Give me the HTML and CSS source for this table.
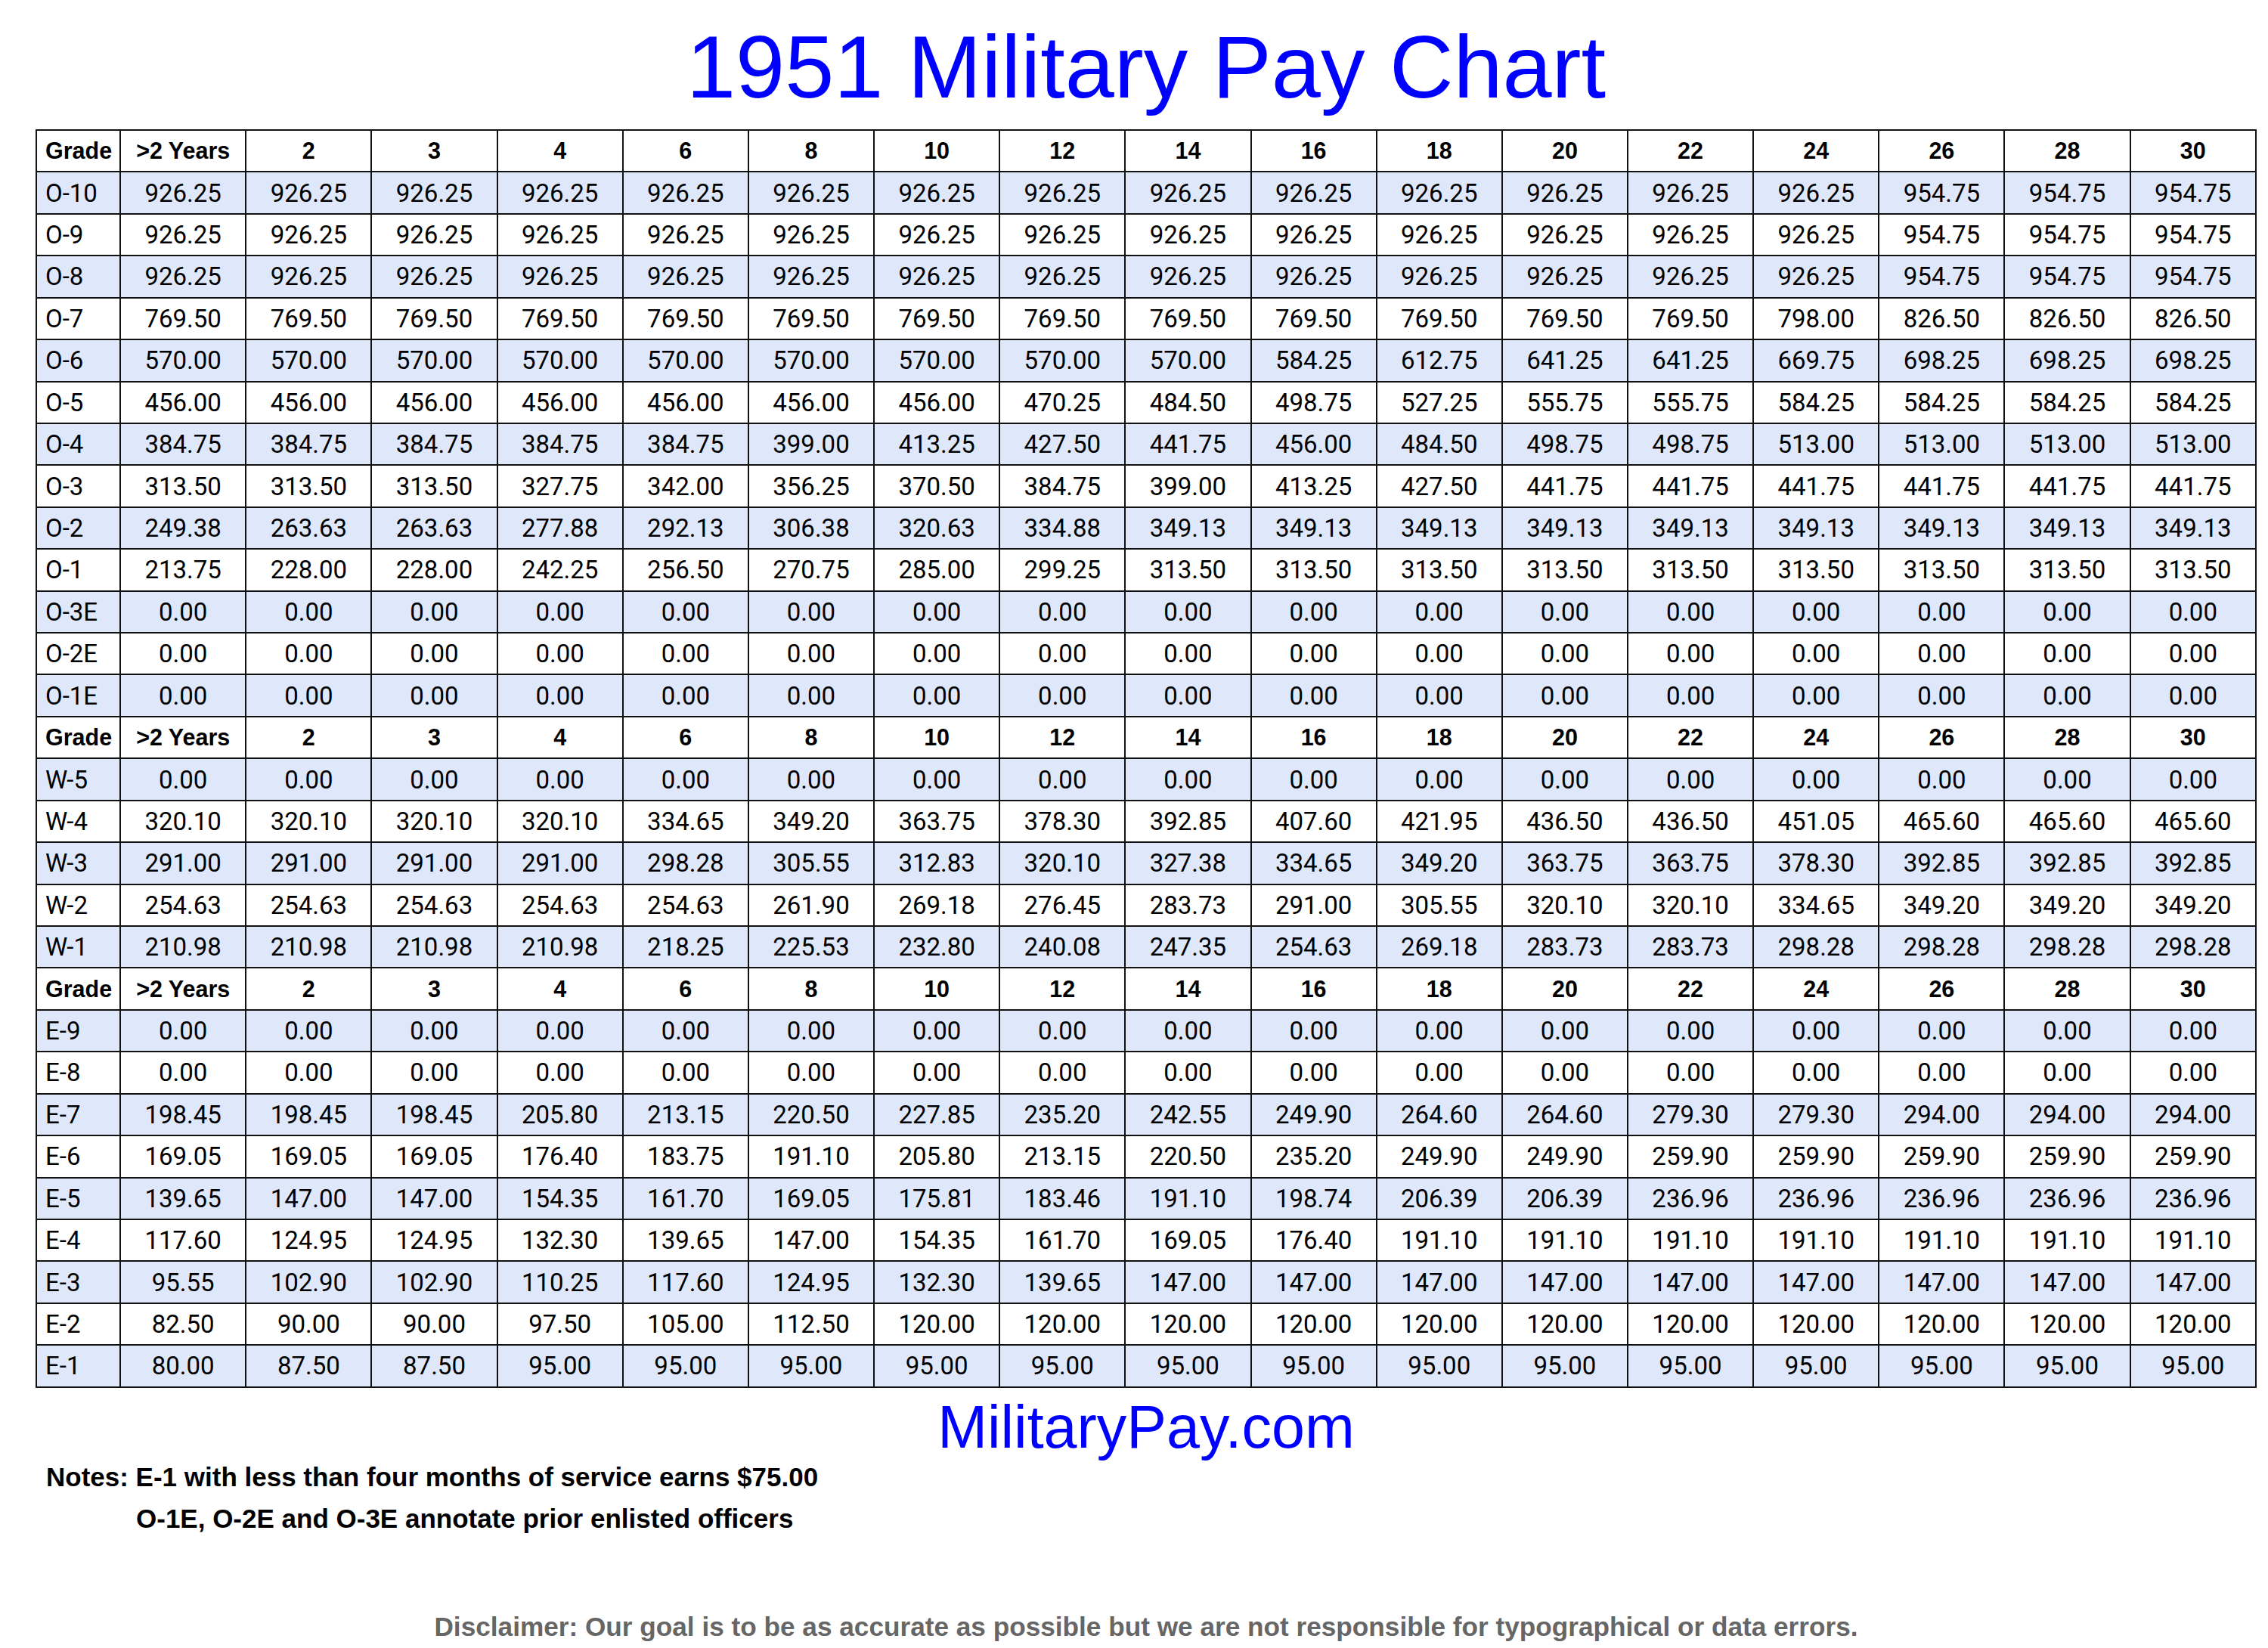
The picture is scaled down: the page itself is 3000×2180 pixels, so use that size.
FILE: index.html
```html
<!DOCTYPE html>
<html>
<head>
<meta charset="utf-8">
<title>1951 Military Pay Chart</title>
<link rel="stylesheet" href="styles.css">
</head>
<body>
<div class="page">
<h1 class="title">1951 Military Pay Chart</h1>
<table class="pay">
<colgroup><col class="cg"><col span="17" class="cv"></colgroup>
<tbody>
<tr class="hd"><td>Grade</td><td>&gt;2 Years</td><td>2</td><td>3</td><td>4</td><td>6</td><td>8</td><td>10</td><td>12</td><td>14</td><td>16</td><td>18</td><td>20</td><td>22</td><td>24</td><td>26</td><td>28</td><td>30</td></tr>
<tr class="b"><td>O-10</td><td>926.25</td><td>926.25</td><td>926.25</td><td>926.25</td><td>926.25</td><td>926.25</td><td>926.25</td><td>926.25</td><td>926.25</td><td>926.25</td><td>926.25</td><td>926.25</td><td>926.25</td><td>926.25</td><td>954.75</td><td>954.75</td><td>954.75</td></tr>
<tr><td>O-9</td><td>926.25</td><td>926.25</td><td>926.25</td><td>926.25</td><td>926.25</td><td>926.25</td><td>926.25</td><td>926.25</td><td>926.25</td><td>926.25</td><td>926.25</td><td>926.25</td><td>926.25</td><td>926.25</td><td>954.75</td><td>954.75</td><td>954.75</td></tr>
<tr class="b"><td>O-8</td><td>926.25</td><td>926.25</td><td>926.25</td><td>926.25</td><td>926.25</td><td>926.25</td><td>926.25</td><td>926.25</td><td>926.25</td><td>926.25</td><td>926.25</td><td>926.25</td><td>926.25</td><td>926.25</td><td>954.75</td><td>954.75</td><td>954.75</td></tr>
<tr><td>O-7</td><td>769.50</td><td>769.50</td><td>769.50</td><td>769.50</td><td>769.50</td><td>769.50</td><td>769.50</td><td>769.50</td><td>769.50</td><td>769.50</td><td>769.50</td><td>769.50</td><td>769.50</td><td>798.00</td><td>826.50</td><td>826.50</td><td>826.50</td></tr>
<tr class="b"><td>O-6</td><td>570.00</td><td>570.00</td><td>570.00</td><td>570.00</td><td>570.00</td><td>570.00</td><td>570.00</td><td>570.00</td><td>570.00</td><td>584.25</td><td>612.75</td><td>641.25</td><td>641.25</td><td>669.75</td><td>698.25</td><td>698.25</td><td>698.25</td></tr>
<tr><td>O-5</td><td>456.00</td><td>456.00</td><td>456.00</td><td>456.00</td><td>456.00</td><td>456.00</td><td>456.00</td><td>470.25</td><td>484.50</td><td>498.75</td><td>527.25</td><td>555.75</td><td>555.75</td><td>584.25</td><td>584.25</td><td>584.25</td><td>584.25</td></tr>
<tr class="b"><td>O-4</td><td>384.75</td><td>384.75</td><td>384.75</td><td>384.75</td><td>384.75</td><td>399.00</td><td>413.25</td><td>427.50</td><td>441.75</td><td>456.00</td><td>484.50</td><td>498.75</td><td>498.75</td><td>513.00</td><td>513.00</td><td>513.00</td><td>513.00</td></tr>
<tr><td>O-3</td><td>313.50</td><td>313.50</td><td>313.50</td><td>327.75</td><td>342.00</td><td>356.25</td><td>370.50</td><td>384.75</td><td>399.00</td><td>413.25</td><td>427.50</td><td>441.75</td><td>441.75</td><td>441.75</td><td>441.75</td><td>441.75</td><td>441.75</td></tr>
<tr class="b"><td>O-2</td><td>249.38</td><td>263.63</td><td>263.63</td><td>277.88</td><td>292.13</td><td>306.38</td><td>320.63</td><td>334.88</td><td>349.13</td><td>349.13</td><td>349.13</td><td>349.13</td><td>349.13</td><td>349.13</td><td>349.13</td><td>349.13</td><td>349.13</td></tr>
<tr><td>O-1</td><td>213.75</td><td>228.00</td><td>228.00</td><td>242.25</td><td>256.50</td><td>270.75</td><td>285.00</td><td>299.25</td><td>313.50</td><td>313.50</td><td>313.50</td><td>313.50</td><td>313.50</td><td>313.50</td><td>313.50</td><td>313.50</td><td>313.50</td></tr>
<tr class="b"><td>O-3E</td><td>0.00</td><td>0.00</td><td>0.00</td><td>0.00</td><td>0.00</td><td>0.00</td><td>0.00</td><td>0.00</td><td>0.00</td><td>0.00</td><td>0.00</td><td>0.00</td><td>0.00</td><td>0.00</td><td>0.00</td><td>0.00</td><td>0.00</td></tr>
<tr><td>O-2E</td><td>0.00</td><td>0.00</td><td>0.00</td><td>0.00</td><td>0.00</td><td>0.00</td><td>0.00</td><td>0.00</td><td>0.00</td><td>0.00</td><td>0.00</td><td>0.00</td><td>0.00</td><td>0.00</td><td>0.00</td><td>0.00</td><td>0.00</td></tr>
<tr class="b"><td>O-1E</td><td>0.00</td><td>0.00</td><td>0.00</td><td>0.00</td><td>0.00</td><td>0.00</td><td>0.00</td><td>0.00</td><td>0.00</td><td>0.00</td><td>0.00</td><td>0.00</td><td>0.00</td><td>0.00</td><td>0.00</td><td>0.00</td><td>0.00</td></tr>
<tr class="hd"><td>Grade</td><td>&gt;2 Years</td><td>2</td><td>3</td><td>4</td><td>6</td><td>8</td><td>10</td><td>12</td><td>14</td><td>16</td><td>18</td><td>20</td><td>22</td><td>24</td><td>26</td><td>28</td><td>30</td></tr>
<tr class="b"><td>W-5</td><td>0.00</td><td>0.00</td><td>0.00</td><td>0.00</td><td>0.00</td><td>0.00</td><td>0.00</td><td>0.00</td><td>0.00</td><td>0.00</td><td>0.00</td><td>0.00</td><td>0.00</td><td>0.00</td><td>0.00</td><td>0.00</td><td>0.00</td></tr>
<tr><td>W-4</td><td>320.10</td><td>320.10</td><td>320.10</td><td>320.10</td><td>334.65</td><td>349.20</td><td>363.75</td><td>378.30</td><td>392.85</td><td>407.60</td><td>421.95</td><td>436.50</td><td>436.50</td><td>451.05</td><td>465.60</td><td>465.60</td><td>465.60</td></tr>
<tr class="b"><td>W-3</td><td>291.00</td><td>291.00</td><td>291.00</td><td>291.00</td><td>298.28</td><td>305.55</td><td>312.83</td><td>320.10</td><td>327.38</td><td>334.65</td><td>349.20</td><td>363.75</td><td>363.75</td><td>378.30</td><td>392.85</td><td>392.85</td><td>392.85</td></tr>
<tr><td>W-2</td><td>254.63</td><td>254.63</td><td>254.63</td><td>254.63</td><td>254.63</td><td>261.90</td><td>269.18</td><td>276.45</td><td>283.73</td><td>291.00</td><td>305.55</td><td>320.10</td><td>320.10</td><td>334.65</td><td>349.20</td><td>349.20</td><td>349.20</td></tr>
<tr class="b"><td>W-1</td><td>210.98</td><td>210.98</td><td>210.98</td><td>210.98</td><td>218.25</td><td>225.53</td><td>232.80</td><td>240.08</td><td>247.35</td><td>254.63</td><td>269.18</td><td>283.73</td><td>283.73</td><td>298.28</td><td>298.28</td><td>298.28</td><td>298.28</td></tr>
<tr class="hd"><td>Grade</td><td>&gt;2 Years</td><td>2</td><td>3</td><td>4</td><td>6</td><td>8</td><td>10</td><td>12</td><td>14</td><td>16</td><td>18</td><td>20</td><td>22</td><td>24</td><td>26</td><td>28</td><td>30</td></tr>
<tr class="b"><td>E-9</td><td>0.00</td><td>0.00</td><td>0.00</td><td>0.00</td><td>0.00</td><td>0.00</td><td>0.00</td><td>0.00</td><td>0.00</td><td>0.00</td><td>0.00</td><td>0.00</td><td>0.00</td><td>0.00</td><td>0.00</td><td>0.00</td><td>0.00</td></tr>
<tr><td>E-8</td><td>0.00</td><td>0.00</td><td>0.00</td><td>0.00</td><td>0.00</td><td>0.00</td><td>0.00</td><td>0.00</td><td>0.00</td><td>0.00</td><td>0.00</td><td>0.00</td><td>0.00</td><td>0.00</td><td>0.00</td><td>0.00</td><td>0.00</td></tr>
<tr class="b"><td>E-7</td><td>198.45</td><td>198.45</td><td>198.45</td><td>205.80</td><td>213.15</td><td>220.50</td><td>227.85</td><td>235.20</td><td>242.55</td><td>249.90</td><td>264.60</td><td>264.60</td><td>279.30</td><td>279.30</td><td>294.00</td><td>294.00</td><td>294.00</td></tr>
<tr><td>E-6</td><td>169.05</td><td>169.05</td><td>169.05</td><td>176.40</td><td>183.75</td><td>191.10</td><td>205.80</td><td>213.15</td><td>220.50</td><td>235.20</td><td>249.90</td><td>249.90</td><td>259.90</td><td>259.90</td><td>259.90</td><td>259.90</td><td>259.90</td></tr>
<tr class="b"><td>E-5</td><td>139.65</td><td>147.00</td><td>147.00</td><td>154.35</td><td>161.70</td><td>169.05</td><td>175.81</td><td>183.46</td><td>191.10</td><td>198.74</td><td>206.39</td><td>206.39</td><td>236.96</td><td>236.96</td><td>236.96</td><td>236.96</td><td>236.96</td></tr>
<tr><td>E-4</td><td>117.60</td><td>124.95</td><td>124.95</td><td>132.30</td><td>139.65</td><td>147.00</td><td>154.35</td><td>161.70</td><td>169.05</td><td>176.40</td><td>191.10</td><td>191.10</td><td>191.10</td><td>191.10</td><td>191.10</td><td>191.10</td><td>191.10</td></tr>
<tr class="b"><td>E-3</td><td>95.55</td><td>102.90</td><td>102.90</td><td>110.25</td><td>117.60</td><td>124.95</td><td>132.30</td><td>139.65</td><td>147.00</td><td>147.00</td><td>147.00</td><td>147.00</td><td>147.00</td><td>147.00</td><td>147.00</td><td>147.00</td><td>147.00</td></tr>
<tr><td>E-2</td><td>82.50</td><td>90.00</td><td>90.00</td><td>97.50</td><td>105.00</td><td>112.50</td><td>120.00</td><td>120.00</td><td>120.00</td><td>120.00</td><td>120.00</td><td>120.00</td><td>120.00</td><td>120.00</td><td>120.00</td><td>120.00</td><td>120.00</td></tr>
<tr class="b"><td>E-1</td><td>80.00</td><td>87.50</td><td>87.50</td><td>95.00</td><td>95.00</td><td>95.00</td><td>95.00</td><td>95.00</td><td>95.00</td><td>95.00</td><td>95.00</td><td>95.00</td><td>95.00</td><td>95.00</td><td>95.00</td><td>95.00</td><td>95.00</td></tr>
</tbody>
</table>
<div class="site">MilitaryPay.com</div>
<div class="notes">
<div class="line">Notes: E-1 with less than four months of service earns $75.00</div>
<div class="line indent">O-1E, O-2E and O-3E annotate prior enlisted officers</div>
</div>
<div class="disc">Disclaimer: Our goal is to be as accurate as possible but we are not responsible for typographical or data errors.</div>
</div>
</body>
</html>
```
FILE: styles.css
```css
html, body {
  margin: 0;
  padding: 0;
  background: #ffffff;
}

.page {
  width: 2938px;
  margin-left: 47px;
  padding-top: 31px;
  font-family: "Liberation Sans", Arial, sans-serif;
  color: #000;
}

.title {
  margin: 0 0 24px 0;
  font: 400 117px/116px "Liberation Sans", Arial, sans-serif;
  color: #0000ff;
  text-align: center;
}

.pay {
  border-collapse: collapse;
  table-layout: fixed;
  width: 2938px;
}

.cg { width: 111px; }
.cv { width: 166px; }

.pay tr {
  height: 55.43px;
}

.pay td {
  border: 2px solid #111;
  padding: 0;
  text-align: center;
  vertical-align: middle;
  font: 400 33px/1 Roboto, "Liberation Sans", sans-serif;
  color: #000;
  white-space: nowrap;
  overflow: hidden;
}

.pay td:first-child {
  text-align: left;
  padding-left: 11px;
}

.pay tr.hd td {
  font: 700 30.5px/1 "Liberation Sans", Arial, sans-serif;
  background: #fff;
}

.pay tr.b td {
  background: #dfe8fb;
}

.site {
  margin-top: 14px;
  font: 400 79px/76px "Liberation Sans", Arial, sans-serif;
  color: #0000ff;
  text-align: center;
}

.notes {
  margin-top: 0;
  padding-left: 14px;
  font: 700 35px/55px "Liberation Sans", Arial, sans-serif;
  color: #000;
}

.notes .indent {
  padding-left: 119px;
}

.disc {
  margin-top: 91px;
  font: 700 35.2px/49px "Liberation Sans", Arial, sans-serif;
  color: #666;
  text-align: center;
}
```
